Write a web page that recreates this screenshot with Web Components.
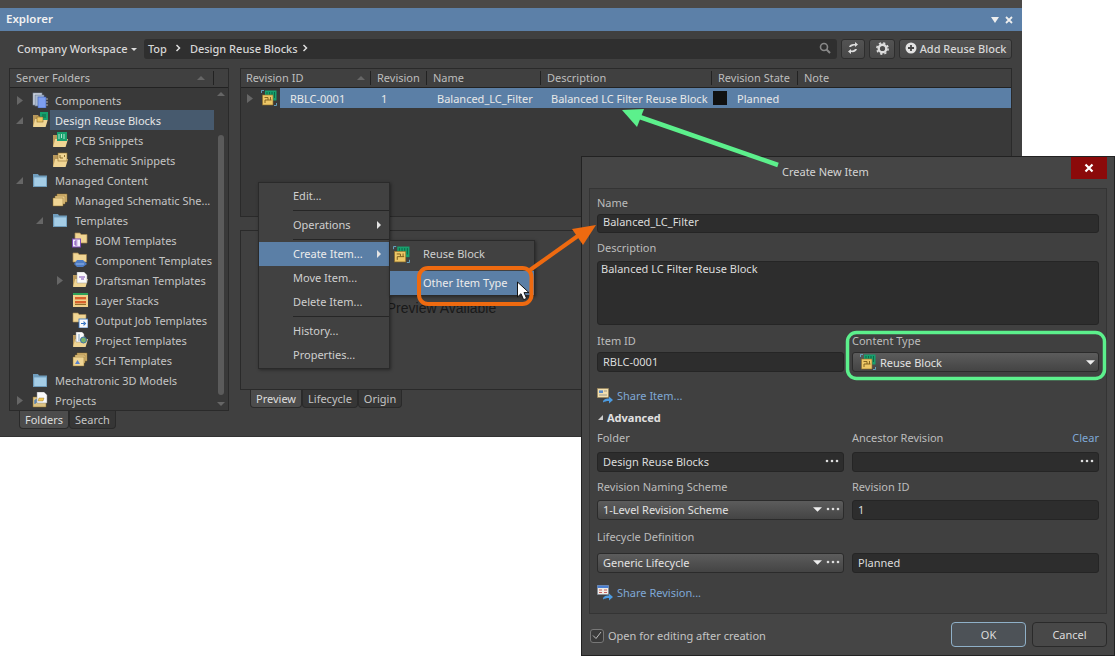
<!DOCTYPE html>
<html>
<head>
<meta charset="utf-8">
<title>Explorer</title>
<style>
  html, body { margin: 0; height: 656px; overflow: hidden; background: #fff; }
  body { position: relative; font: 11px "Noto Sans", sans-serif; color: #c9c9c9; }
</style>
</head>
<body>

<rs-explorer>
  <rs-tree-row slot="tree" depth="0" arrow="right" icon="components" label="Components"></rs-tree-row>
  <rs-tree-row slot="tree" depth="0" arrow="down" icon="folder-reuse" label="Design Reuse Blocks" selected></rs-tree-row>
  <rs-tree-row slot="tree" depth="1" icon="folder-pcb" label="PCB Snippets"></rs-tree-row>
  <rs-tree-row slot="tree" depth="1" icon="folder-sch" label="Schematic Snippets"></rs-tree-row>
  <rs-tree-row slot="tree" depth="0" arrow="down" icon="folder-blue" label="Managed Content"></rs-tree-row>
  <rs-tree-row slot="tree" depth="1" icon="folder-stack" label="Managed Schematic She..."></rs-tree-row>
  <rs-tree-row slot="tree" depth="1" arrow="down" icon="folder-blue" label="Templates"></rs-tree-row>
  <rs-tree-row slot="tree" depth="2" icon="folder-bom" label="BOM Templates"></rs-tree-row>
  <rs-tree-row slot="tree" depth="2" icon="folder-comp" label="Component Templates"></rs-tree-row>
  <rs-tree-row slot="tree" depth="2" arrow="right" icon="folder-draft" label="Draftsman Templates"></rs-tree-row>
  <rs-tree-row slot="tree" depth="2" icon="folder-layer" label="Layer Stacks"></rs-tree-row>
  <rs-tree-row slot="tree" depth="2" icon="folder-output" label="Output Job Templates"></rs-tree-row>
  <rs-tree-row slot="tree" depth="2" icon="folder-project" label="Project Templates"></rs-tree-row>
  <rs-tree-row slot="tree" depth="2" icon="folder-schtpl" label="SCH Templates"></rs-tree-row>
  <rs-tree-row slot="tree" depth="0" icon="folder-blue" label="Mechatronic 3D Models"></rs-tree-row>
  <rs-tree-row slot="tree" depth="0" arrow="right" icon="projects" label="Projects"></rs-tree-row>
</rs-explorer>

<rs-menu></rs-menu>
<rs-dialog></rs-dialog>
<rs-callouts></rs-callouts>

<script>
// ---- icons, all on a 16x16 grid
const folderTan = '<path d="M1 3h5l1 1.500h6V14H1z" fill="#b8975a"/><path d="M1 15l2.200-8H16l-2.400 8z" fill="#f0d594"/>';
const chipFront = '<rect x="1.500" y="5" width="10.500" height="10" fill="#edc766" stroke="#8d6d2b" stroke-width=".6"/><path d="M3.500 7.500h3.500v2.500H4v3M7 10h3.500M9.500 7v3" fill="none" stroke="#7a5c1c" stroke-width=".9"/>';
const icons = {
  'components': '<rect x="1" y="1" width="9" height="12" fill="#d5dbe4" stroke="#7d8aa0" stroke-width=".6"/><rect x="3" y="3" width="9" height="11" fill="#aab9cf" stroke="#6a7890" stroke-width=".6"/><rect x="6" y="5" width="8" height="11" fill="#7d9ef0" stroke="#3e5fb4" stroke-width=".6"/><path d="M14 7h2M14 10h2M14 13h2" stroke="#bbb" stroke-width=".9"/>',
  'folder-blue': '<path d="M1 2h5l1 1.500h8V15H1z" fill="#6f9dbd"/><rect x="2.200" y="5.400" width="12" height="8.600" fill="#a5cde6"/>',
  'folder-reuse': folderTan + '<rect x="8" y="0" width="8" height="8" fill="#18a06e"/><path d="M10 3h4M10 5h4" stroke="#0b5c3e" stroke-width=".8"/><rect x="5" y="5" width="6" height="5" fill="#edc766" stroke="#7a5c1c" stroke-width=".5"/>',
  'folder-pcb': folderTan + '<rect x="5" y="0" width="10" height="9" fill="#18a06e"/><path d="M7 2v5M9.500 2v4M12 2v5" stroke="#bff0d8" stroke-width=".9"/>',
  'folder-sch': folderTan + '<rect x="6" y="1" width="9" height="8" fill="#f0d594" stroke="#8d6d2b" stroke-width=".6"/><path d="M8 3v3h3M12.500 3v2" stroke="#7a5c1c" stroke-width=".9" fill="none"/>',
  'folder-stack': '<path d="M5 2h10v8H5z" fill="#d6b675" stroke="#8d6d2b" stroke-width=".5"/><path d="M3 4h10v8H3z" fill="#e7c989" stroke="#8d6d2b" stroke-width=".5"/><path d="M1 6h10v8H1z" fill="#f0d594" stroke="#8d6d2b" stroke-width=".5"/>',
  'folder-bom': '<path d="M3 1h5l1 1.500h6V11H3z" fill="#f0d594" stroke="#a98a50" stroke-width=".7"/><rect x="0.500" y="7" width="8" height="8" fill="#f4f0fa" stroke="#7c4bb5" stroke-width="1"/><path d="M3 9v4h2.400M3 11h2.400M5.400 9H3" stroke="#7c4bb5" stroke-width="1" fill="none"/>',
  'folder-comp': '<path d="M1 1h5l1 1.500h7.500V10H1z" fill="#f0d594" stroke="#a98a50" stroke-width=".7"/><path d="M2 12l3-4h6l4 4-4 3H5z" fill="#4e7cc4"/><path d="M4 12h8" stroke="#a9c6f0" stroke-width=".8"/>',
  'folder-draft': folderTan + '<path d="M5 0h7l3 3v8H5z" fill="#fafafa" stroke="#999" stroke-width=".5"/><path d="M7 5h6M9 7h3" stroke="#7c4bb5" stroke-width="1.200"/>',
  'folder-layer': '<rect x="1" y="1" width="15" height="3" fill="#2fa35a"/><path d="M1 3h15v12H1z" fill="#efd08a"/><rect x="3" y="5" width="11" height="2.400" fill="#d8622c"/><rect x="3" y="9" width="11" height="2.400" fill="#d8622c"/><rect x="3" y="12" width="11" height="1" fill="#8d6d2b"/>',
  'folder-output': '<path d="M1 1h5l1 1.500h7V10H1z" fill="#f0d594" stroke="#a98a50" stroke-width=".6"/><rect x="7" y="7" width="9" height="9" fill="#fafafa" stroke="#2f6fc0" stroke-width=".8"/><path d="M9 11.500h3.600M11.500 9.600l2 1.900-2 1.900" stroke="#2f6fc0" stroke-width="1.100" fill="none"/>',
  'folder-project': folderTan + '<path d="M4 0h6l2 2v8H4z" fill="#fafafa" stroke="#888" stroke-width=".5"/><circle cx="11.500" cy="8" r="3" fill="#79b26a" stroke="#3b6ea8" stroke-width="1"/><rect x="6" y="2" width="2" height="7" fill="#bcd"/>',
  'folder-schtpl': '<path d="M5 1h10v8H5z" fill="#d6b675" stroke="#8d6d2b" stroke-width=".5"/><path d="M3 3h10v8H3z" fill="#e7c989" stroke="#8d6d2b" stroke-width=".5"/><path d="M1 5h11v9H1z" fill="#f0d594" stroke="#8d6d2b" stroke-width=".5"/><path d="M3 12l2.500-4L8 12z" fill="#5a82c8"/>',
  'projects': '<path d="M1 5h13v10H1z" fill="#dcc283" stroke="#8d6d2b" stroke-width=".5"/><path d="M5 0h7l3 3v8H5z" fill="#fafafa" stroke="#888" stroke-width=".5"/><path d="M7 6h5l-1 3H6z" fill="#f0c850" stroke="#8d6d2b" stroke-width=".4"/><path d="M3 12V8h2M3 10h2" stroke="#2f6fc0" stroke-width="1" fill="none"/>',
  'reuse': '<rect x="4" y="0.500" width="11.500" height="10" fill="#18a06e"/><path d="M6 2v2.500M8.500 2v2.500M11 2v2.500M13.500 2v6" stroke="#0b5c3e" stroke-width=".8"/>' + chipFront + '<path d="M.5 3V.5H3M15.500 13v2.500H13" stroke="#6bb6d8" stroke-width=".8" fill="none"/>',
  'share-item': '<rect x="0.500" y="0.500" width="11" height="9" fill="#f2dfae" stroke="#9a8458" stroke-width=".6"/><rect x="2" y="2.400" width="4" height="2.600" fill="#5a8ac8"/><path d="M7 3h3M2 7h8" stroke="#888" stroke-width=".8"/><path d="M6 14.500c0-3 2-4 6-4V8.500l4 3.500-4 3.500v-2.500c-3 0-4 .5-6 1.500z" fill="#4d9be0"/>',
  'share-rev': '<rect x="0.500" y="0.500" width="11" height="9" fill="#f0ece4" stroke="#7a8aa0" stroke-width=".6"/><rect x="0.500" y="0.500" width="11" height="2.500" fill="#4a7ed0"/><path d="M2 5h3M7 5h3M2 7.500h3M7 7.500h3" stroke="#c0504d" stroke-width=".9"/><path d="M6 14.500c0-3 2-4 6-4V8.500l4 3.500-4 3.500v-2.500c-3 0-4 .5-6 1.500z" fill="#4d9be0"/>'
};

// small base class: css + render() go in an open shadow root
class RsBase extends HTMLElement {
  connectedCallback() {
    if (this.shadowRoot) return;
    this.attachShadow({ mode: 'open' }).innerHTML = '<style>' + this.constructor.css + '</style>' + this.render();
  }
  attr(name, fallback = '') {
    return this.hasAttribute(name) ? this.getAttribute(name) : fallback;
  }
}

class RsIcon extends RsBase {
  static css = ':host{display:inline-block;width:16px;height:16px;flex:none} svg{display:block;width:100%;height:100%}';
  render() {
    return '<svg viewBox="0 0 16 16">' + (icons[this.attr('name')] || '') + '</svg>';
  }
}

class RsTreeRow extends RsBase {
  static css = `
    :host { display: flex; align-items: center; height: 20px; padding-left: calc(var(--depth) * 20px + 6px); color: #c4c4c4; white-space: nowrap; }
    .arrow { width: 8px; height: 9px; flex: none; margin-right: 8px; }
    .label { flex: 1; height: 20px; margin: 0 14px 0 2px; padding-left: 5px; line-height: 21px; }
    :host([selected]) .label { background: #475a6e; color: #e6e6e6; }
  `;
  render() {
    this.style.setProperty('--depth', this.attr('depth', '0'));
    const a = this.attr('arrow');
    const p = a == 'right' ? '<path d="M1 0l6 4.500-6 4.500z" fill="#666"/>' : a == 'down' ? '<path d="M7 1v7H0z" fill="#666"/>' : '';
    return `<svg class="arrow" viewBox="0 0 8 9">${p}</svg><rs-icon name="${this.attr('icon')}"></rs-icon><span class="label">${this.attr('label')}</span>`;
  }
}

class RsTabs extends RsBase {
  static css = `
    :host { display: flex; height: 19px; align-items: flex-start; }
    span { height: 18px; line-height: 17px; padding: 0 5px; background: #363636; color: #c4c4c4; border: 1px solid #2a2a2a; border-top: 0; border-radius: 0 0 4px 4px; box-sizing: border-box; }
    span.on { background: #4c4c4c; color: #dedede; }
  `;
  render() {
    return this.attr('items').split(',').map((t, i) => `<span class="${i == 0 ? 'on' : ''}">${t}</span>`).join('');
  }
}

class RsExplorer extends RsBase {
  static css = `
    :host { position: absolute; left: 0; top: 0; width: 1022px; height: 437px; background: #404040; display: flex; flex-direction: column; box-sizing: border-box; border-bottom: 1px solid #333; }
    .strip { height: 8px; background: #4b4947; }
    .title { height: 23px; background: #5c80a8; color: #f2f2f2; font-size: 11.500px; line-height: 21px; padding: 0 7px 0 6px; display: flex; align-items: center; }
    .title svg { display: block; margin-left: 4px; }
    .title b { flex: 1; font-weight: 600; height: 23px; }
    .bar { height: 37px; box-sizing: border-box; display: flex; align-items: center; padding: 0 10px 1px 17px; font-weight: 500; white-space: nowrap; }
    .ws { color: #d8d8d8; width: 114px; padding-bottom: 2px; }
    .caret { width: 0; height: 0; border: 3px solid transparent; border-top: 3px solid #ddd; border-bottom: 0; margin-right: 7px; }
    .path { width: 694px; height: 20px; background: #2f2f2f; border-radius: 3px; display: flex; align-items: center; padding: 0 0 2px 4px; box-sizing: border-box; color: #d6d6d6; }
    .path svg { flex: none; }
    .btn { height: 20px; box-sizing: border-box; background: linear-gradient(#535353, #484848); border: 1px solid #2e2e2e; border-radius: 3px; display: flex; align-items: center; justify-content: center; padding-bottom: 2px; color: #d8d8d8; margin-left: 4px; }
    .main { flex: 1; display: flex; padding: 0 10px 0 9px; }
    .left { width: 220px; margin-right: 11px; }
    .right { flex: 1; }
    .panel { background: #393939; border: 1px solid #2a2a2a; box-sizing: border-box; overflow: hidden; }
    .left .panel { height: 343px; position: relative; }
    .head { height: 20px; margin-top: -1px; background: #404040; border-bottom: 1px solid #222; box-sizing: border-box; display: flex; align-items: center; color: #bdbdbd; white-space: nowrap; }
    .tree { padding-top: 2px; }
    .tabs1 { margin-left: 10px; }
    .scroll { position: absolute; right: 2px; top: 20px; bottom: 0; width: 10px; background: #393939; }
    .thumb { position: absolute; left: 2px; top: 46px; height: 260px; width: 6px; border-radius: 3px; background: #5b5b5b; }
    .up, .dn { position: absolute; left: 1px; width: 0; height: 0; border: 4px solid transparent; }
    .up { top: 3px; border-bottom: 4px solid #666; border-top: 0; }
    .dn { bottom: 4px; border-top: 4px solid #666; border-bottom: 0; }
    .sort { width: 0; height: 0; border: 4px solid transparent; border-bottom: 4px solid #666; border-top: 0; }
    .sep { width: 1px; height: 14px; background: #222; }
    .grid { height: 149px; }
    .col { display: flex; align-items: center; justify-content: space-between; padding: 0 5px 0 6px; box-sizing: border-box; border-right: 1px solid #222; height: 14px; }
    .col.first { padding-left: 5px; }
    .row { display: flex; height: 20px; align-items: center; color: #e8e8e8; }
    .row svg { margin-left: 5px; flex: none; }
    .row rs-icon { margin-left: 7px; }
    .cells { flex: 1; height: 20px; background: #5b7fa6; margin-left: 3px; display: flex; align-items: center; line-height: 21px; }
    .cells span { box-sizing: border-box; padding-left: 10px; white-space: nowrap; }
    .black { width: 14px; height: 14px; background: #111; margin: 0 10px 0 0; }
    .preview { height: 160px; margin-top: 13px; display: flex; padding: 69px 0 0 124px; background: #404040; color: #191919; font: 14px "Liberation Sans", sans-serif; }
    .tabs2 { margin-left: 10px; }
  `;
  render() {
    return `
      <div class="strip"></div>
      <div class="title"><b>Explorer</b>
        <svg width="8" height="6" viewBox="0 0 8 6"><path d="M0 0h8L4 6z" fill="#eee"/></svg>
        <svg width="12" height="8" viewBox="0 0 12 8"><path d="M3 1l6 6M9 1L3 7" stroke="#eee" stroke-width="1.800"/></svg>
      </div>
      <div class="bar">
        <span class="ws">Company Workspace</span><span class="caret"></span>
        <div class="path">
          <span style="width:27px">Top</span>
          <svg width="6" height="8" viewBox="0 0 6 8" style="margin-right:9px"><path d="M1.500 1l3 3-3 3" fill="none" stroke="#ddd" stroke-width="1.500"/></svg>
          <span style="width:112px">Design Reuse Blocks</span>
          <svg width="6" height="8" viewBox="0 0 6 8"><path d="M1.500 1l3 3-3 3" fill="none" stroke="#ddd" stroke-width="1.500"/></svg>
          <span style="flex:1"></span>
          <svg width="12" height="12" viewBox="0 0 12 12" style="margin-right:6px"><circle cx="5" cy="5" r="3.500" fill="none" stroke="#888" stroke-width="1.600"/><path d="M7.500 7.500L11 11" stroke="#888" stroke-width="2"/></svg>
        </div>
        <div class="btn" style="width:24px"><svg width="12" height="12" viewBox="0 0 12 12"><path d="M2 5c.5-2.500 3-3.500 6-3V0l3 2.500L8 5V3.500c-2 0-3 .5-4 1.500zM10 7c-.5 2.500-3 3.500-6 3v2L1 9.500 4 7v1.500c2 0 3-.5 4-1.500z" fill="#ddd"/></svg></div>
        <div class="btn" style="width:26px"><svg width="13" height="13" viewBox="0 0 13 13"><circle cx="6.500" cy="6.500" r="3.800" fill="none" stroke="#ddd" stroke-width="2.400"/><circle cx="6.500" cy="6.500" r="5.600" fill="none" stroke="#ddd" stroke-width="1.600" stroke-dasharray="2.200 2.200"/></svg></div>
        <div class="btn" style="width:113px"><svg width="12" height="12" viewBox="0 0 12 12" style="margin-right:3px"><circle cx="6" cy="6" r="5.500" fill="#e2e2e2"/><path d="M6 3v6M3 6h6" stroke="#444" stroke-width="1.800"/></svg>Add Reuse Block</div>
      </div>
      <div class="main">
        <div class="left">
          <div class="panel">
            <div class="head"><span style="flex:1;padding-left:6px">Server Folders</span><span class="sort"></span><span class="sep" style="margin:0 14px 0 8px"></span></div>
            <div class="tree"><slot name="tree"></slot></div>
            <div class="scroll"><i class="up"></i><i class="thumb"></i><i class="dn"></i></div>
          </div>
          <rs-tabs class="tabs1" items="Folders,Search"></rs-tabs>
        </div>
        <div class="right">
          <div class="panel grid">
            <div class="head">
              <span class="col first" style="width:130px">Revision ID<span class="sort"></span></span>
              <span class="col" style="width:56px">Revision</span>
              <span class="col" style="width:114px">Name</span>
              <span class="col" style="width:171px">Description</span>
              <span class="col" style="width:86px">Revision State</span>
              <span class="col" style="border:0">Note</span>
            </div>
            <div class="row">
              <svg width="8" height="9" viewBox="0 0 8 9"><path d="M1 0l6 4.500-6 4.500z" fill="#666"/></svg>
              <rs-icon name="reuse"></rs-icon>
              <div class="cells">
                <span style="width:91px">RBLC-0001</span>
                <span style="width:56px">1</span>
                <span style="width:114px">Balanced_LC_Filter</span>
                <span style="width:172px">Balanced LC Filter Reuse Block</span>
                <i class="black"></i><span style="padding:0">Planned</span>
              </div>
            </div>
          </div>
          <div class="panel preview">No Preview Available</div>
          <rs-tabs class="tabs2" items="Preview,Lifecycle,Origin"></rs-tabs>
        </div>
      </div>`;
  }
}

class RsMenuItem extends RsBase {
  static css = `
    :host { display: flex; align-items: center; height: 24px; padding-left: 34px; color: #cfcfcf; white-space: nowrap; position: relative; }
    :host([on]) { background: #5b7fa6; color: #ececec; }
    span { flex: 1; padding-bottom: 2px; }
    i { width: 0; height: 0; border: 4px solid transparent; border-left: 4px solid #e4e4e4; border-right: 0; margin-right: 8px; }
    rs-icon { position: absolute; left: 3px; top: 4px; width: 17px; height: 17px; }
  `;
  render() {
    return (this.hasAttribute('icon') ? `<rs-icon name="${this.attr('icon')}"></rs-icon>` : '') +
      `<span><slot></slot></span>` + (this.hasAttribute('sub') ? '<i></i>' : '');
  }
}

class RsMenu extends RsBase {
  static css = `
    :host { position: absolute; left: 258px; top: 182px; width: 132px; height: 187px; }
    .box { background: #414141; border: 1px solid #2a2a2a; box-sizing: border-box; box-shadow: 1px 1px 3px rgba(0,0,0,.4); }
    .main { height: 187px; padding-top: 1px; }
    .sub { position: absolute; left: 131px; top: 58px; width: 146px; height: 56px; padding-top: 1px; }
    .sub rs-menu-item { padding-left: 33px; }
    .sub .g { height: 5px; }
    hr { border: 0; height: 1px; background: #262626; margin: 2px 0 2px 34px; }
  `;
  render() {
    return `
      <div class="box main">
        <rs-menu-item>Edit...</rs-menu-item><hr>
        <rs-menu-item sub>Operations</rs-menu-item><hr>
        <rs-menu-item sub on>Create Item...</rs-menu-item>
        <rs-menu-item>Move Item...</rs-menu-item>
        <rs-menu-item>Delete Item...</rs-menu-item><hr>
        <rs-menu-item>History...</rs-menu-item>
        <rs-menu-item>Properties...</rs-menu-item>
      </div>
      <div class="box sub">
        <rs-menu-item icon="reuse">Reuse Block</rs-menu-item>
        <div class="g"></div>
        <rs-menu-item on>Other Item Type</rs-menu-item>
      </div>`;
  }
}

class RsField extends RsBase {
  static css = `
    :host { display: flex; flex-direction: column; justify-content: space-between; flex: 1 1 0; min-width: 0; height: 100%; }
    .l { display: flex; justify-content: space-between; height: 14px; line-height: 14px; color: #bcbcbc; }
    a { color: #7fa8d6; }
  `;
  render() {
    const c = this.hasAttribute('clear') ? '<a>Clear</a>' : '';
    return `<div class="l"><span>${this.attr('label')}</span>${c}</div><slot></slot>`;
  }
}

const dots = '<svg width="14" height="4" viewBox="0 0 14 4" style="flex:none"><circle cx="2" cy="2" r="1.300" fill="#ddd"/><circle cx="7" cy="2" r="1.300" fill="#ddd"/><circle cx="12" cy="2" r="1.300" fill="#ddd"/></svg>';
const caret = '<svg width="9" height="5" viewBox="0 0 10 5" style="flex:none"><path d="M0 0h10L5 5z" fill="#eee"/></svg>';

class RsInput extends RsBase {
  static css = `
    :host { display: flex; align-items: center; box-sizing: border-box; height: 20px; background: #2d2d2d; border: 1px solid #252525; border-radius: 3px; padding: 0 4px 2px 5px; color: #dcdcdc; }
    :host([multi]) { height: 64px; align-items: flex-start; padding: 0 4px 0 3px; }
    :host([multi]) span { margin-top: -1px; }
    span { flex: 1; white-space: nowrap; }
  `;
  render() {
    return `<span>${this.attr('value')}</span>${this.hasAttribute('dots') ? dots : ''}`;
  }
}

class RsSelect extends RsBase {
  static css = `
    :host { display: flex; align-items: center; box-sizing: border-box; height: 20px; background: linear-gradient(#5c5c5c, #444); border: 1px solid #2b2b2b; border-radius: 3px; padding: 0 3px 0 5px; color: #e2e2e2; }
    :host([dots]) { padding-bottom: 2px; }
    span { flex: 1; white-space: nowrap; }
    rs-icon { margin: 0 4px 0 2px; }
    svg + svg { margin-left: 4px; }
  `;
  render() {
    return (this.hasAttribute('icon') ? `<rs-icon name="${this.attr('icon')}"></rs-icon>` : '') +
      `<span>${this.attr('value')}</span>${caret}${this.hasAttribute('dots') ? dots : ''}`;
  }
}

class RsShare extends RsBase {
  static css = `
    :host { display: flex; align-items: center; height: 16px; color: #7fa8d6; }
    rs-icon { margin-right: 4px; }
    span { padding-bottom: 2px; }
  `;
  render() {
    return `<rs-icon name="${this.attr('icon')}"></rs-icon><span><slot></slot></span>`;
  }
}

class RsDialog extends RsBase {
  static css = `
    :host { position: absolute; left: 581px; top: 156px; width: 534px; height: 500px; background: #454545; border: 1px solid #222; box-sizing: border-box; display: flex; flex-direction: column; }
    .title { height: 31px; flex: none; display: flex; color: #d4d4d4; align-items: center; padding-left: 200px; box-sizing: border-box; }
    .title span { flex: 1; padding-bottom: 3px; }
    .close { width: 36px; height: 22px; align-self: flex-start; margin-right: 7px; background: #8b0a0a; display: flex; align-items: center; justify-content: center; }
    .inner { margin: 0 7px; height: 426px; border: 1px solid #343434; background: #404040; box-sizing: border-box; padding: 7px 7px 0; }
    .row { display: flex; gap: 8px; }
    .adv { display: flex; align-items: center; font-weight: 700; color: #e0e0e0; padding-bottom: 2px; box-sizing: border-box; }
    .adv svg { margin: 0 3px 0 0; }
    .foot { flex: 1; display: flex; align-items: center; padding: 0 7px 0 8px; }
    .check { width: 14px; height: 14px; box-sizing: border-box; border: 1px solid #777; border-radius: 3px; background: #3a3a3a; margin: 2px 4px 0 0; display: flex; align-items: center; justify-content: center; }
    .foot span { flex: 1; color: #c4c4c4; margin-top: 1px; }
    .b { height: 25px; width: 75px; box-sizing: border-box; border: 1px solid #2a2a2a; border-radius: 4px; background: #484848; display: flex; align-items: center; justify-content: center; color: #dcdcdc; margin-left: 6px; }
    .b.ok { border-color: #8fb0c8; background: #4d5257; }
  `;
  render() {
    return `
      <div class="title"><span>Create New Item</span>
        <div class="close"><svg width="10" height="10" viewBox="0 0 10 10"><path d="M1.500 1.500l7 7M8.500 1.500l-7 7" stroke="#fff" stroke-width="2.200"/></svg></div>
      </div>
      <div class="inner">
        <div class="row" style="height:37px"><rs-field label="Name"><rs-input style="height:19px;padding-bottom:4px" value="Balanced_LC_Filter"></rs-input></rs-field></div>
        <div class="row" style="height:84px;margin-top:8px"><rs-field label="Description"><rs-input multi value="Balanced LC Filter Reuse Block"></rs-input></rs-field></div>
        <div class="row" style="height:38px;margin-top:9px">
          <rs-field label="Item ID"><rs-input value="RBLC-0001"></rs-input></rs-field>
          <rs-field label="Content Type"><rs-select icon="reuse" value="Reuse Block"></rs-select></rs-field>
        </div>
        <rs-share icon="share-item" style="margin-top:16px">Share Item...</rs-share>
        <div class="adv" style="height:16px;margin-top:6px"><svg width="7" height="7" viewBox="0 0 7 7"><path d="M6 1v5H1z" fill="#ccc"/></svg>Advanced</div>
        <div class="row" style="height:41px;margin-top:5px">
          <rs-field label="Folder"><rs-input dots value="Design Reuse Blocks"></rs-input></rs-field>
          <rs-field label="Ancestor Revision" clear><rs-input dots></rs-input></rs-field>
        </div>
        <div class="row" style="height:40px;margin-top:8px">
          <rs-field label="Revision Naming Scheme"><rs-select dots value="1-Level Revision Scheme"></rs-select></rs-field>
          <rs-field label="Revision ID"><rs-input value="1"></rs-input></rs-field>
        </div>
        <div class="row" style="height:43px;margin-top:10px">
          <rs-field label="Lifecycle Definition"><rs-select dots value="Generic Lifecycle"></rs-select></rs-field>
          <rs-field><rs-input value="Planned"></rs-input></rs-field>
        </div>
        <rs-share icon="share-rev" style="margin-top:12px">Share Revision...</rs-share>
      </div>
      <div class="foot">
        <div class="check"><svg width="10" height="9" viewBox="0 0 10 9"><path d="M1 4.500l3 3 5-6.500" fill="none" stroke="#bbb" stroke-width="1"/></svg></div>
        <span>Open for editing after creation</span>
        <div class="b ok">OK</div><div class="b">Cancel</div>
      </div>`;
  }
}

// the coloured marks drawn over the screenshot, plus the mouse pointer
class RsCallouts extends RsBase {
  static css = ':host{position:absolute;left:0;top:0;width:1115px;height:656px;pointer-events:none} svg{display:block}';
  render() {
    return `<svg width="1115" height="656" viewBox="0 0 1115 656">
      <rect x="419" y="268" width="112.500" height="36" rx="9" fill="none" stroke="#ee6a10" stroke-width="4"/>
      <path d="M530 270L582 233" stroke="#ee6a10" stroke-width="4"/>
      <path d="M596 225L572 229 583 245z" fill="#ee6a10"/>
      <rect x="847.500" y="332.500" width="257" height="46" rx="9" fill="none" stroke="#5cf08c" stroke-width="3.500"/>
      <path d="M778 165L634 115" stroke="#5cf08c" stroke-width="4.500"/>
      <path d="M622 110L644 109 637 127z" fill="#5cf08c"/>
      <path d="M517.500 282v15l3.500-3.300 2.600 6 3-1.300-2.600-5.800h5z" fill="#fff" stroke="#111" stroke-width="1"/>
    </svg>`;
  }
}

customElements.define('rs-icon', RsIcon);
customElements.define('rs-tree-row', RsTreeRow);
customElements.define('rs-tabs', RsTabs);
customElements.define('rs-explorer', RsExplorer);
customElements.define('rs-menu-item', RsMenuItem);
customElements.define('rs-menu', RsMenu);
customElements.define('rs-field', RsField);
customElements.define('rs-input', RsInput);
customElements.define('rs-select', RsSelect);
customElements.define('rs-share', RsShare);
customElements.define('rs-dialog', RsDialog);
customElements.define('rs-callouts', RsCallouts);
</script>
</body>
</html>
